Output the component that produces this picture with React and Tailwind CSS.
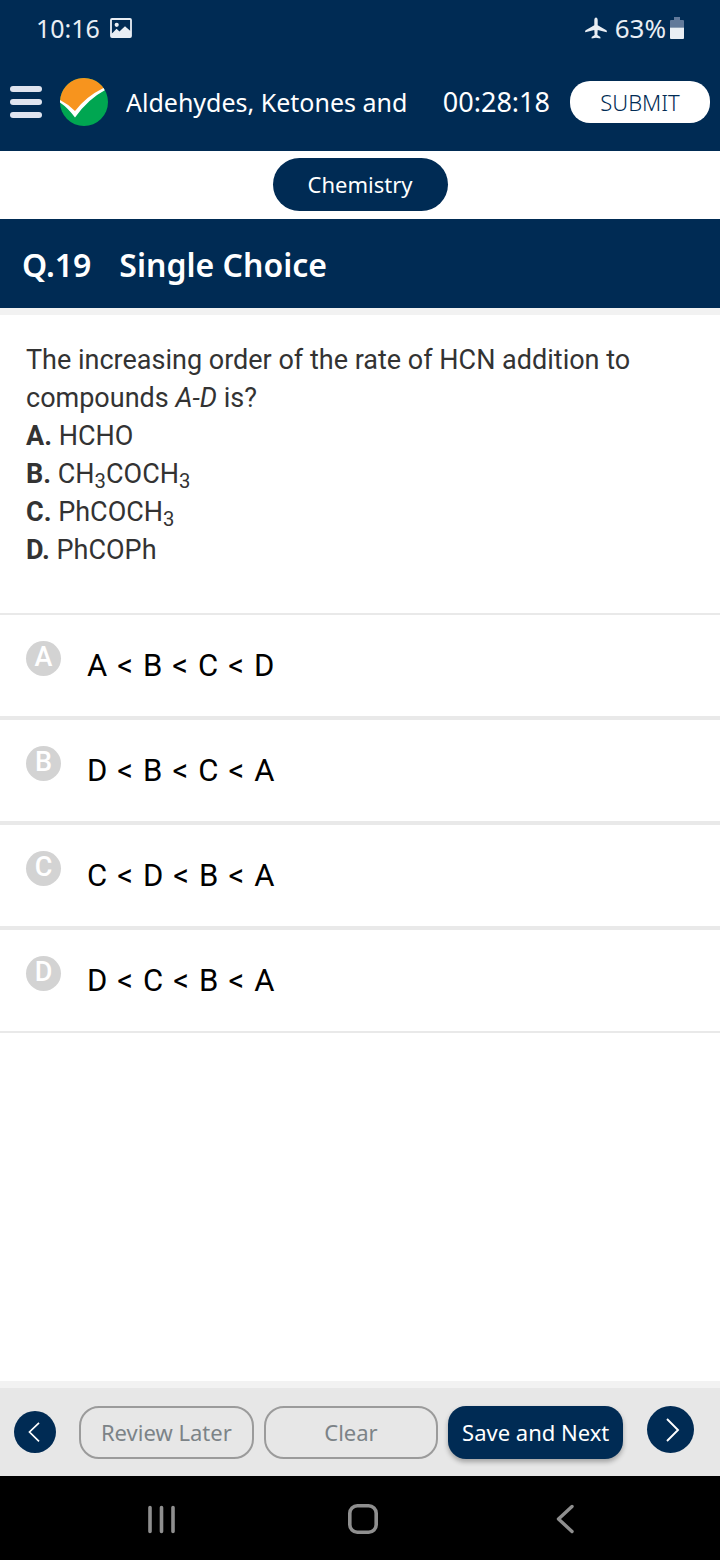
import React, { useState } from "react";

const OPTIONS = [
  { key: "A", order: ["A", "B", "C", "D"] },
  { key: "B", order: ["D", "B", "C", "A"] },
  { key: "C", order: ["C", "D", "B", "A"] },
  { key: "D", order: ["D", "C", "B", "A"] },
];

function StatusBar() {
  return (
    <div className="flex h-14 items-center justify-between px-9 text-[#e9eef4]">
      <div className="flex items-center gap-2.5">
        <span className="text-[25px] leading-8">10:16</span>
        <svg className="h-5 w-[22px]" viewBox="0 0 22 20" aria-hidden="true">
          <rect x="1" y="1" width="20" height="18" rx="1" fill="none" stroke="currentColor" strokeWidth="1.8" />
          <circle cx="6.7" cy="6.8" r="2.1" fill="currentColor" />
          <path d="M1 16 L3 14.5 L6.5 10.8 L9.5 13.5 L11.5 11.5 L15 8.3 L21 13.5 V19 H1Z" fill="currentColor" />
        </svg>
      </div>
      <div className="flex items-center gap-1">
        <svg className="mr-1 h-[22px] w-[22px]" viewBox="0 0 22 22" aria-hidden="true">
          <path
            d="M11 0.5 C12 0.5 12.7 1.8 12.7 3.2 V8.2 L21.4 13.2 C21.9 13.6 22 14.6 21.7 15.3 L12.7 13 L12.4 18 L15.4 20 V21.6 L11 20.8 L6.6 21.6 V20 L9.6 18 L9.3 13 L0.3 15.3 C0 14.6 0.1 13.6 0.6 13.2 L9.3 8.2 V3.2 C9.3 1.8 10 0.5 11 0.5Z"
            fill="currentColor"
          />
        </svg>
        <span className="text-[26px] leading-8">63%</span>
        <svg className="h-[22px] w-3.5" viewBox="0 0 14 22" aria-hidden="true">
          <path d="M4 0 H10 V3 H13 Q14 3 14 4 V10.5 H0 V4 Q0 3 1 3 H4Z" fill="#61799a" />
          <path d="M0 10.5 H14 V21 Q14 22 13 22 H1 Q0 22 0 21Z" fill="currentColor" />
        </svg>
      </div>
    </div>
  );
}

function TitleBar() {
  return (
    <div className="flex h-[95px] items-center px-2.5 pb-1">
      <button type="button" aria-label="Menu" className="flex h-8 w-8 shrink-0 flex-col justify-between">
        <span className="h-1.5 w-8 rounded-sm bg-[#dfe4ef]" />
        <span className="h-1.5 w-8 rounded-sm bg-[#dfe4ef]" />
        <span className="h-1.5 w-8 rounded-sm bg-[#dfe4ef]" />
      </button>
      <svg className="ml-[18px] h-12 w-12 shrink-0" viewBox="0 0 48 48" aria-hidden="true">
        <circle cx="24" cy="24" r="24" fill="#00a651" />
        <path d="M0.1 22.5 A24 24 0 0 1 44 10.7 Q28 20 15 35 Z" fill="#f7941e" />
        <path d="M0 22 Q8 26 15 33 Q26 18.5 43.5 10 L44.8 12.2 Q28 21 15 39.5 Q8 30 0 24.5Z" fill="#fff" />
      </svg>
      <h1 className="ml-[18px] min-w-0 flex-1 overflow-hidden text-[25px] leading-9 whitespace-nowrap">
        Aldehydes, Ketones and
      </h1>
      <time className="mr-5 ml-4 shrink-0 text-[27px] leading-9">00:28:18</time>
      <button
        type="button"
        className="h-[42px] w-[140px] shrink-0 rounded-[20px] bg-white text-[22px] leading-8 font-light text-[#002b54]"
      >
        SUBMIT
      </button>
    </div>
  );
}

function Option({ option, checked, onSelect }) {
  return (
    <label className="relative flex h-[105px] cursor-pointer border-y-2 border-[#e9e9e9] pl-[26px]">
      <input
        type="radio"
        name="answer"
        value={option.key}
        checked={checked}
        onChange={onSelect}
        className="sr-only"
      />
      <span
        className={
          "mt-[26px] flex h-[35px] w-[35px] shrink-0 justify-center rounded-full text-[27px] leading-[33px] font-medium text-white " +
          (checked ? "bg-[#002b54]" : "bg-[#d3d3d3]")
        }
      >
        {option.key}
      </span>
      <span className="mt-[33px] ml-[26px] flex gap-2.5 text-[31px] leading-9 text-black">
        {option.order.map((letter, i) => (
          <React.Fragment key={letter}>
            {i > 0 && <span>&lt;</span>}
            <span>{letter}</span>
          </React.Fragment>
        ))}
      </span>
    </label>
  );
}

function Footer({ onClear }) {
  return (
    <footer className="flex h-[95px] shrink-0 items-start border-t-[7px] border-[#f2f2f2] bg-[#e7e7e7] px-3.5 pt-[18px] text-[22px]">
      <button
        type="button"
        aria-label="Previous question"
        className="mt-[5px] flex h-[42px] w-[42px] shrink-0 items-center justify-center rounded-full bg-[#002b54]"
      >
        <svg className="mr-0.5 h-5 w-3" viewBox="0 0 12 20" fill="none" stroke="#fff" strokeWidth="1.7" aria-hidden="true">
          <path d="M11 0.8 L1.5 10 L11 19.4" />
        </svg>
      </button>
      <div className="mr-6 ml-[23px] grid flex-1 grid-cols-3 gap-2.5">
        <button type="button" className="h-[53px] rounded-[20px] border-2 border-[#9b9b9b] text-[#7c8387]">
          Review Later
        </button>
        <button
          type="button"
          onClick={onClear}
          className="h-[53px] rounded-[20px] border-2 border-[#9b9b9b] text-[#7c8387]"
        >
          Clear
        </button>
        <button
          type="button"
          className="h-[53px] rounded-[18px] bg-[#002b54] whitespace-nowrap text-white shadow-[0_3px_5px_rgba(0,0,0,0.3)]"
        >
          Save and Next
        </button>
      </div>
      <button
        type="button"
        aria-label="Next question"
        className="mr-3 flex h-[47px] w-[47px] shrink-0 items-center justify-center rounded-full bg-[#002b54]"
      >
        <svg className="ml-1 h-6 w-3.5" viewBox="0 0 14 24" fill="none" stroke="#fff" strokeWidth="1.9" aria-hidden="true">
          <path d="M1 1 L12 12 L1 23" />
        </svg>
      </button>
    </footer>
  );
}

function SystemNav() {
  return (
    <nav className="flex h-[84px] shrink-0 items-center justify-center gap-[170px] bg-black pt-0.5 pl-1.5 text-[#8f8f8f]">
      <button type="button" aria-label="Recent apps" className="flex w-8 justify-center">
        <svg className="h-8 w-8" viewBox="0 0 32 32" stroke="currentColor" strokeWidth="3.6" strokeLinecap="round" aria-hidden="true">
          <path d="M5 4.5 V28.5 M16.5 4.5 V28.5 M28 4.5 V28.5" />
        </svg>
      </button>
      <button type="button" aria-label="Home" className="flex w-8 justify-center">
        <svg className="h-8 w-8" viewBox="0 0 32 32" fill="none" stroke="currentColor" strokeWidth="3.6" aria-hidden="true">
          <rect x="2.8" y="2.8" width="26.4" height="26.4" rx="7.5" />
        </svg>
      </button>
      <button type="button" aria-label="Back" className="flex w-8 justify-center">
        <svg className="h-8 w-8" viewBox="0 0 32 32" fill="none" stroke="currentColor" strokeWidth="3.4" strokeLinecap="round" strokeLinejoin="round" aria-hidden="true">
          <path d="M23 3.5 L9.5 16 L23 28.5" />
        </svg>
      </button>
    </nav>
  );
}

export default function App() {
  const [answer, setAnswer] = useState(null);

  return (
    <div className="flex min-h-screen flex-col bg-white font-['Noto_Sans',sans-serif]">
      <header className="bg-[#002b54] text-white">
        <StatusBar />
        <TitleBar />
      </header>
      <div className="flex justify-center pt-[7px] pb-2">
        <button type="button" className="h-[53px] w-[175px] rounded-full bg-[#002b54] text-[22px] text-white">
          Chemistry
        </button>
      </div>
      <h2 className="flex h-24 items-center gap-7 border-b-[7px] border-[#f2f2f2] bg-[#002b54] px-[22px] pt-0.5 text-[32px] leading-[44px] font-semibold text-white">
        <span>Q.19</span>
        <span>Single Choice</span>
      </h2>
      <main className="flex-1 font-[Roboto,sans-serif]">
        <div className="px-[26px] pt-[26px] pb-11 text-[27px] leading-[38px] text-[#333]">
          <p>
            The increasing order of the rate of HCN addition to compounds <i>A-D</i> is?
          </p>
          <p>
            <b>A.</b> HCHO
          </p>
          <p>
            <b>B.</b> CH<sub>3</sub>COCH<sub>3</sub>
          </p>
          <p>
            <b>C.</b> PhCOCH<sub>3</sub>
          </p>
          <p>
            <b>D.</b> PhCOPh
          </p>
        </div>
        <fieldset>
          {OPTIONS.map((option) => (
            <Option
              key={option.key}
              option={option}
              checked={answer === option.key}
              onSelect={() => setAnswer(option.key)}
            />
          ))}
        </fieldset>
      </main>
      <Footer onClear={() => setAnswer(null)} />
      <SystemNav />
    </div>
  );
}
